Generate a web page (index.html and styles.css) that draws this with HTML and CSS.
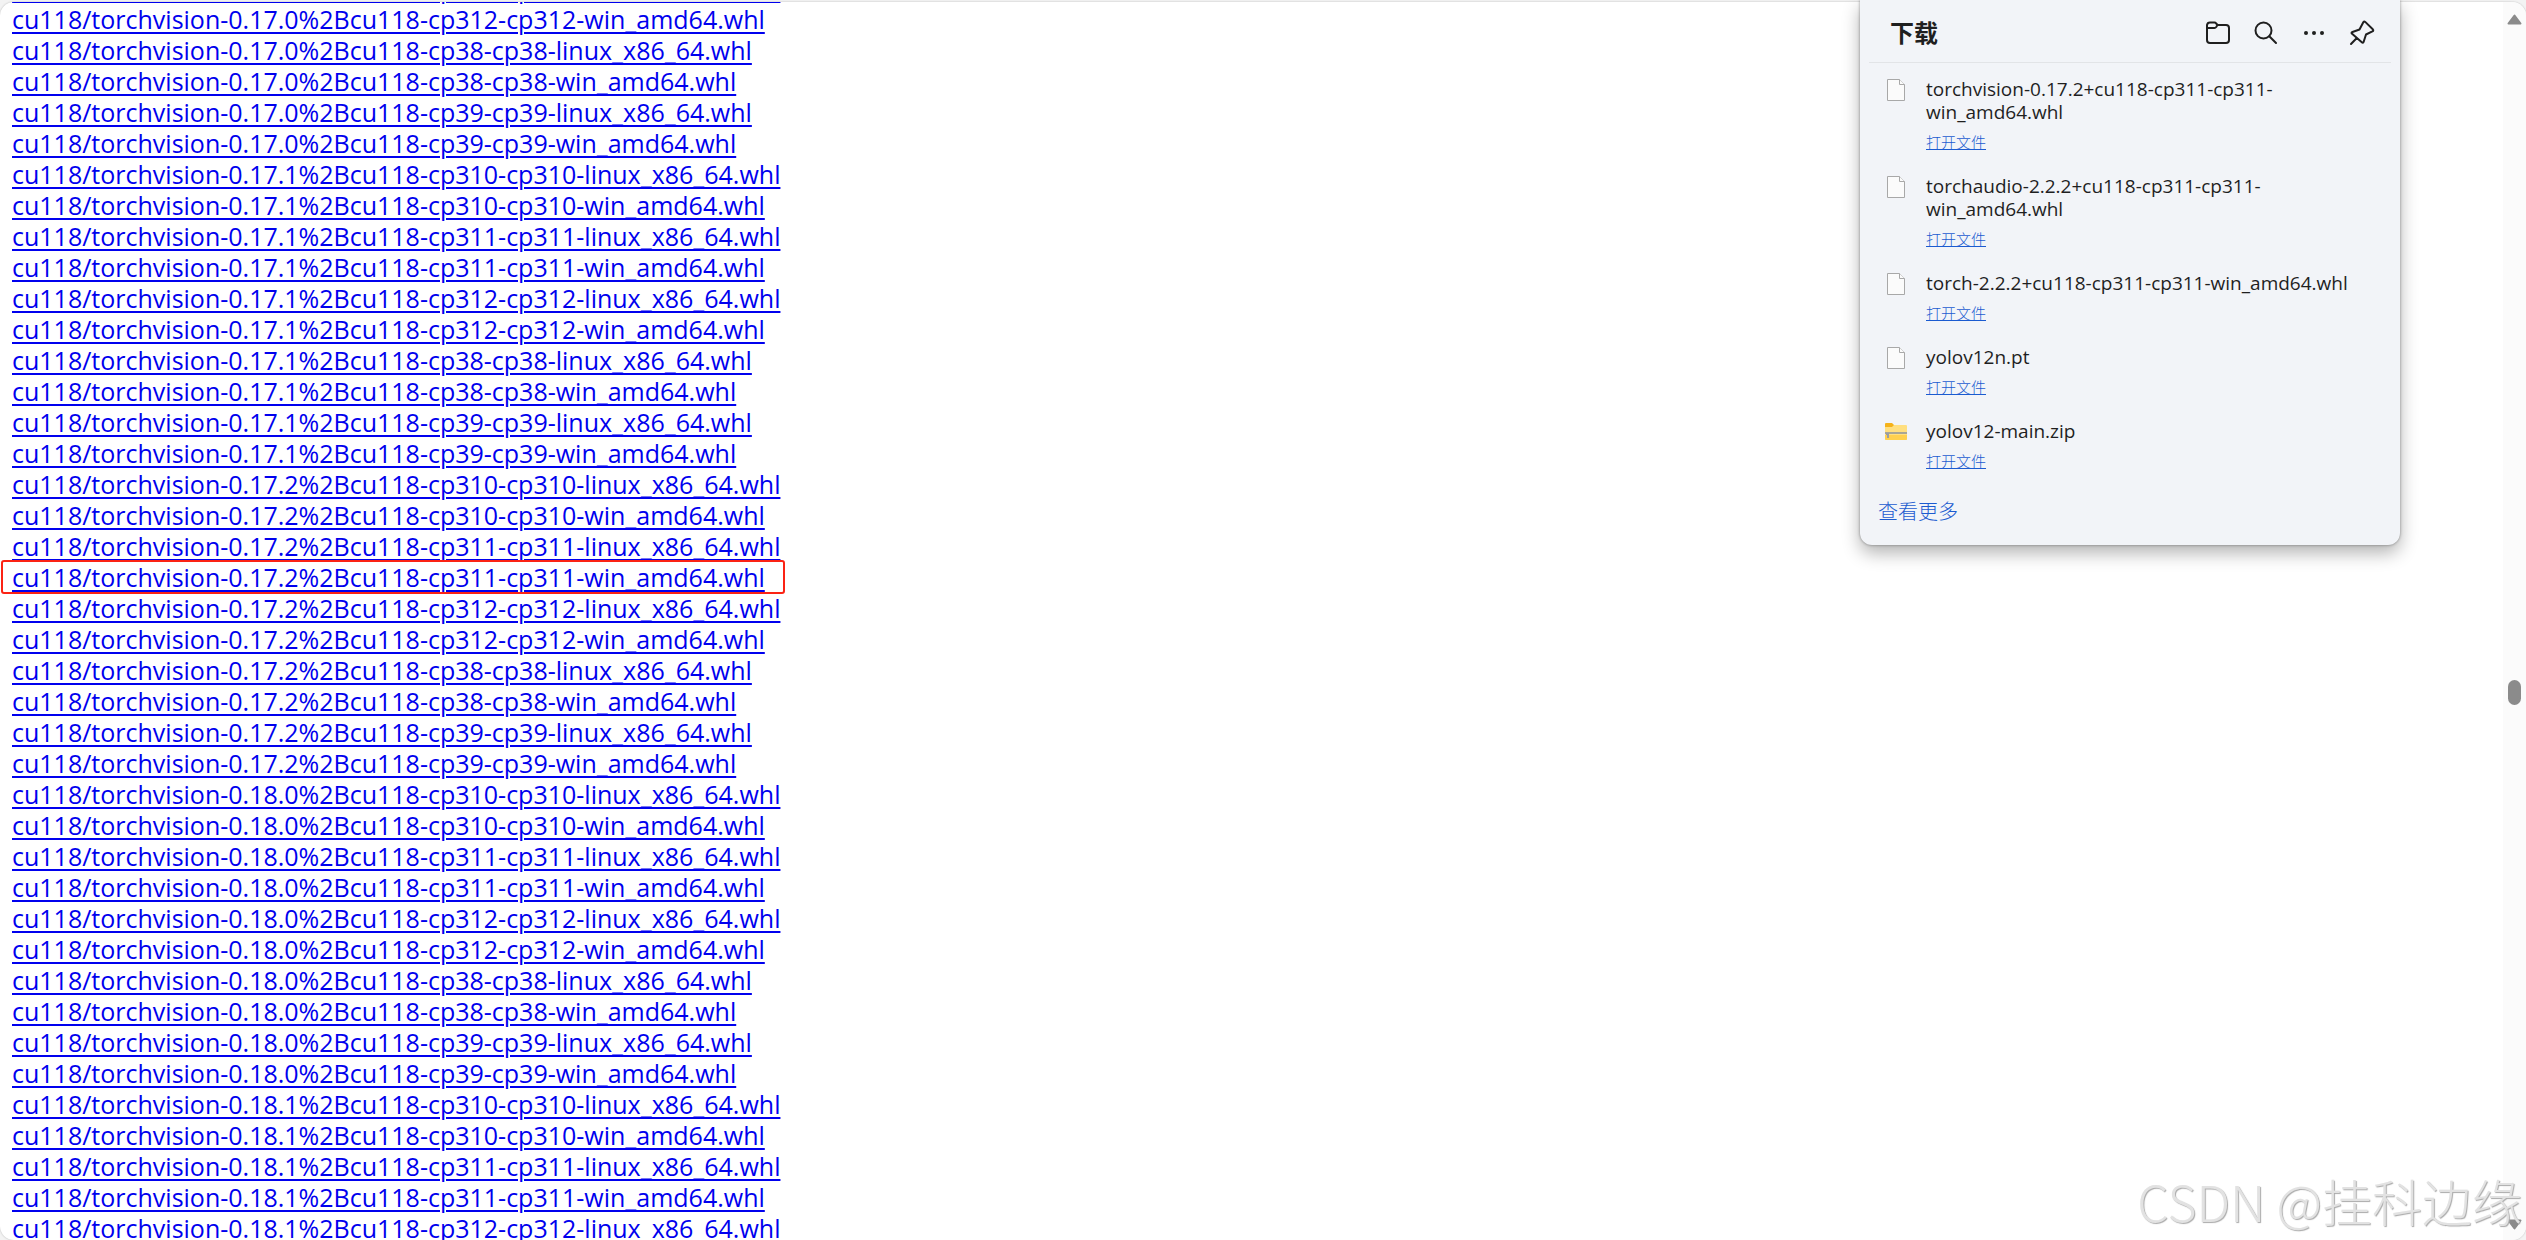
FILE: index.html
```
<!DOCTYPE html>
<html lang="zh-CN">
<head>
  <meta charset="utf-8">
  <title>torch_stable</title>
  <link rel="stylesheet" href="styles.css">
</head>
<body>
  <div class="page">
    <main class="content">
      <ul class="links">
        <li><a href="#">cu118/torchvision-0.17.0%2Bcu118-cp312-cp312-linux_x86_64.whl</a></li>
        <li><a href="#">cu118/torchvision-0.17.0%2Bcu118-cp312-cp312-win_amd64.whl</a></li>
        <li><a href="#">cu118/torchvision-0.17.0%2Bcu118-cp38-cp38-linux_x86_64.whl</a></li>
        <li><a href="#">cu118/torchvision-0.17.0%2Bcu118-cp38-cp38-win_amd64.whl</a></li>
        <li><a href="#">cu118/torchvision-0.17.0%2Bcu118-cp39-cp39-linux_x86_64.whl</a></li>
        <li><a href="#">cu118/torchvision-0.17.0%2Bcu118-cp39-cp39-win_amd64.whl</a></li>
        <li><a href="#">cu118/torchvision-0.17.1%2Bcu118-cp310-cp310-linux_x86_64.whl</a></li>
        <li><a href="#">cu118/torchvision-0.17.1%2Bcu118-cp310-cp310-win_amd64.whl</a></li>
        <li><a href="#">cu118/torchvision-0.17.1%2Bcu118-cp311-cp311-linux_x86_64.whl</a></li>
        <li><a href="#">cu118/torchvision-0.17.1%2Bcu118-cp311-cp311-win_amd64.whl</a></li>
        <li><a href="#">cu118/torchvision-0.17.1%2Bcu118-cp312-cp312-linux_x86_64.whl</a></li>
        <li><a href="#">cu118/torchvision-0.17.1%2Bcu118-cp312-cp312-win_amd64.whl</a></li>
        <li><a href="#">cu118/torchvision-0.17.1%2Bcu118-cp38-cp38-linux_x86_64.whl</a></li>
        <li><a href="#">cu118/torchvision-0.17.1%2Bcu118-cp38-cp38-win_amd64.whl</a></li>
        <li><a href="#">cu118/torchvision-0.17.1%2Bcu118-cp39-cp39-linux_x86_64.whl</a></li>
        <li><a href="#">cu118/torchvision-0.17.1%2Bcu118-cp39-cp39-win_amd64.whl</a></li>
        <li><a href="#">cu118/torchvision-0.17.2%2Bcu118-cp310-cp310-linux_x86_64.whl</a></li>
        <li><a href="#">cu118/torchvision-0.17.2%2Bcu118-cp310-cp310-win_amd64.whl</a></li>
        <li><a href="#">cu118/torchvision-0.17.2%2Bcu118-cp311-cp311-linux_x86_64.whl</a></li>
        <li class="marked"><a href="#">cu118/torchvision-0.17.2%2Bcu118-cp311-cp311-win_amd64.whl</a></li>
        <li><a href="#">cu118/torchvision-0.17.2%2Bcu118-cp312-cp312-linux_x86_64.whl</a></li>
        <li><a href="#">cu118/torchvision-0.17.2%2Bcu118-cp312-cp312-win_amd64.whl</a></li>
        <li><a href="#">cu118/torchvision-0.17.2%2Bcu118-cp38-cp38-linux_x86_64.whl</a></li>
        <li><a href="#">cu118/torchvision-0.17.2%2Bcu118-cp38-cp38-win_amd64.whl</a></li>
        <li><a href="#">cu118/torchvision-0.17.2%2Bcu118-cp39-cp39-linux_x86_64.whl</a></li>
        <li><a href="#">cu118/torchvision-0.17.2%2Bcu118-cp39-cp39-win_amd64.whl</a></li>
        <li><a href="#">cu118/torchvision-0.18.0%2Bcu118-cp310-cp310-linux_x86_64.whl</a></li>
        <li><a href="#">cu118/torchvision-0.18.0%2Bcu118-cp310-cp310-win_amd64.whl</a></li>
        <li><a href="#">cu118/torchvision-0.18.0%2Bcu118-cp311-cp311-linux_x86_64.whl</a></li>
        <li><a href="#">cu118/torchvision-0.18.0%2Bcu118-cp311-cp311-win_amd64.whl</a></li>
        <li><a href="#">cu118/torchvision-0.18.0%2Bcu118-cp312-cp312-linux_x86_64.whl</a></li>
        <li><a href="#">cu118/torchvision-0.18.0%2Bcu118-cp312-cp312-win_amd64.whl</a></li>
        <li><a href="#">cu118/torchvision-0.18.0%2Bcu118-cp38-cp38-linux_x86_64.whl</a></li>
        <li><a href="#">cu118/torchvision-0.18.0%2Bcu118-cp38-cp38-win_amd64.whl</a></li>
        <li><a href="#">cu118/torchvision-0.18.0%2Bcu118-cp39-cp39-linux_x86_64.whl</a></li>
        <li><a href="#">cu118/torchvision-0.18.0%2Bcu118-cp39-cp39-win_amd64.whl</a></li>
        <li><a href="#">cu118/torchvision-0.18.1%2Bcu118-cp310-cp310-linux_x86_64.whl</a></li>
        <li><a href="#">cu118/torchvision-0.18.1%2Bcu118-cp310-cp310-win_amd64.whl</a></li>
        <li><a href="#">cu118/torchvision-0.18.1%2Bcu118-cp311-cp311-linux_x86_64.whl</a></li>
        <li><a href="#">cu118/torchvision-0.18.1%2Bcu118-cp311-cp311-win_amd64.whl</a></li>
        <li><a href="#">cu118/torchvision-0.18.1%2Bcu118-cp312-cp312-linux_x86_64.whl</a></li>
      </ul>
    </main>

    <div class="scrollbar">
      <svg class="arrow" viewBox="0 0 15 11"><path d="M7.5 1.5 L13.5 9.5 H1.5 Z"/></svg>
      <div class="track"><div class="thumb"></div></div>
      <svg class="arrow" viewBox="0 0 15 11"><path d="M7.5 9.5 L13.5 1.5 H1.5 Z"/></svg>
    </div>
  </div>

  <section class="downloads">
    <header class="downloads-header">
      <h2>下载</h2>
      <button type="button" aria-label="打开下载文件夹">
        <svg viewBox="0 0 24 24"><path d="M1 7V4A3 3 0 0 1 4 1.500H8.500Q9.500 1.500 10.200 2.500L11.500 4H20A3 3 0 0 1 23 7V19A3 3 0 0 1 20 22H4A3 3 0 0 1 1 19V7H8.500Q9.500 7 10.200 6L11.500 4"/></svg>
      </button>
      <button type="button" aria-label="搜索下载">
        <svg viewBox="0 0 24 24"><circle cx="9.500" cy="9.500" r="8"/><path d="M15.300 15.300L22 22"/></svg>
      </button>
      <button type="button" aria-label="更多选项">
        <svg class="dots" viewBox="0 0 24 24"><circle cx="4" cy="12" r="2"/><circle cx="12" cy="12" r="2"/><circle cx="20" cy="12" r="2"/></svg>
      </button>
      <button type="button" aria-label="固定下载">
        <svg viewBox="0 0 24 24"><path d="M13.300 1.200Q14 -.2 15.200 .9L22.800 8.300Q23.900 9.600 22.400 10.400L16 13.500L13.600 21Q13 22.500 11.800 21.300L1.800 12.600Q1 11.500 2.500 11L9.500 8.500ZM6.800 17L1 23"/></svg>
      </button>
    </header>

    <ul class="files">
      <li class="file">
        <svg class="file-icon" viewBox="0 0 22 22"><path class="sheet" d="M2.500 .5H14.500L19.500 5.500V21.500H2.500Z"/><path class="sheet" d="M14.500 .5V5.500H19.500"/></svg>
        <div class="file-info">
          <p>torchvision-0.17.2+cu118-cp311-cp311-win_amd64.whl</p>
          <a href="#">打开文件</a>
        </div>
      </li>
      <li class="file">
        <svg class="file-icon" viewBox="0 0 22 22"><path class="sheet" d="M2.500 .5H14.500L19.500 5.500V21.500H2.500Z"/><path class="sheet" d="M14.500 .5V5.500H19.500"/></svg>
        <div class="file-info">
          <p>torchaudio-2.2.2+cu118-cp311-cp311-win_amd64.whl</p>
          <a href="#">打开文件</a>
        </div>
      </li>
      <li class="file">
        <svg class="file-icon" viewBox="0 0 22 22"><path class="sheet" d="M2.500 .5H14.500L19.500 5.500V21.500H2.500Z"/><path class="sheet" d="M14.500 .5V5.500H19.500"/></svg>
        <div class="file-info">
          <p>torch-2.2.2+cu118-cp311-cp311-win_amd64.whl</p>
          <a href="#">打开文件</a>
        </div>
      </li>
      <li class="file">
        <svg class="file-icon" viewBox="0 0 22 22"><path class="sheet" d="M2.500 .5H14.500L19.500 5.500V21.500H2.500Z"/><path class="sheet" d="M14.500 .5V5.500H19.500"/></svg>
        <div class="file-info">
          <p>yolov12n.pt</p>
          <a href="#">打开文件</a>
        </div>
      </li>
      <li class="file">
        <svg class="file-icon" viewBox="0 0 22 22"><path fill="#f5b21a" d="M0 3Q0 2 1 2H7L9 4V8H0Z"/><path fill="#ffdf80" d="M0 6H7L9 4H21Q22 4 22 5V18Q22 19 21 19H1Q0 19 0 18Z"/><path fill="#ffd04f" d="M0 14H22V18Q22 19 21 19H1Q0 19 0 18Z"/><path fill="#a8a697" d="M0 11H22V13H0Z"/><path fill="#9a9da3" d="M1 12H4V17H2V14H1Z"/></svg>
        <div class="file-info">
          <p>yolov12-main.zip</p>
          <a href="#">打开文件</a>
        </div>
      </li>
    </ul>

    <a class="more" href="#">查看更多</a>
  </section>

  <div class="watermark">CSDN @挂科边缘</div>
</body>
</html>
```
FILE: styles.css
```
* {
  box-sizing: border-box;
}

body {
  margin: 0;
  padding-top: 2px;
  height: 100vh;
  overflow: hidden;
  background-color: #f3f3f3;
  font-family: "Open Sans", "Noto Sans CJK SC", sans-serif;
}

ul {
  margin: 0;
  padding: 0;
  list-style: none;
}

.page {
  display: flex;
  height: 100%;
  overflow: hidden;
  background-color: #fff;
  border-radius: 14px;
  box-shadow: 0 0 2px rgba(0, 0, 0, 0.25);
}

.content {
  flex: 1;
  padding: 0 12px;
}

/* list is scrolled part of a row past the top edge */
.links {
  margin-top: -29px;
}

.links li {
  width: fit-content;
  font-size: 25px;
  line-height: 31px;
  white-space: nowrap;
}

.links a {
  color: #0000ee;
  text-decoration-thickness: 2px;
  text-underline-offset: 3px;
}

.marked {
  position: relative;
}

.marked::after {
  content: "";
  position: absolute;
  top: -2px;
  right: -20px;
  bottom: -1px;
  left: -11px;
  border: 2px solid #fb2314;
  border-radius: 3px;
}

/* scrollbar */
.scrollbar {
  display: flex;
  flex-direction: column;
  align-items: center;
  width: 23px;
  padding: 12px 0 10px;
  background-color: #fbfbfb;
}

.arrow {
  width: 15px;
  height: 11px;
  fill: #8b8b8b;
  stroke: #8b8b8b;
  stroke-width: 2;
  stroke-linejoin: round;
}

.track {
  display: flex;
  flex: 1;
  flex-direction: column;
}

.track::before {
  content: "";
  flex: 56;
}

.track::after {
  content: "";
  flex: 44;
}

.thumb {
  width: 13px;
  height: 25px;
  background-color: #8b8b8b;
  border-radius: 7px;
}

/* downloads popup */
.downloads {
  position: absolute;
  top: 0;
  right: 126px;
  width: 540px;
  padding-bottom: 22px;
  background-color: #f2f4f8;
  border-radius: 0 0 12px 12px;
  box-shadow: 0 0 3px rgba(0, 0, 0, 0.4), 0 8px 18px rgba(0, 0, 0, 0.3);
  color: #1f1f1f;
}

.downloads-header {
  display: flex;
  align-items: center;
  gap: 24px;
  height: 63px;
  margin: 0 9px;
  padding: 3px 17px 0 21px;
  border-bottom: 1px solid #e2e4e7;
}

.downloads-header h2 {
  flex: 1;
  margin: 0;
  font-size: 24px;
  line-height: 32px;
}

.downloads-header button {
  width: 24px;
  height: 24px;
  padding: 0;
  border: none;
  background: none;
  cursor: pointer;
}

.downloads-header svg {
  display: block;
  overflow: visible;
  fill: none;
  stroke: #1f1f1f;
  stroke-width: 2;
  stroke-linecap: round;
  stroke-linejoin: round;
}

.downloads-header .dots {
  fill: #1f1f1f;
  stroke: none;
}

.files {
  display: flex;
  flex-direction: column;
  gap: 22px;
  padding: 15px 45px 0 25px;
}

.file {
  display: flex;
  gap: 19px;
}

.file-icon {
  flex: none;
  width: 22px;
  height: 22px;
  margin-top: 1px;
}

.sheet {
  fill: #fbfbfb;
  stroke: #a8a8a8;
}

.file-info p {
  margin: 0 0 6px;
  font-size: 19px;
  line-height: 23px;
}

.file-info a {
  display: block;
  width: fit-content;
  color: #1b5bd0;
  font-family: "Noto Sans CJK SC", sans-serif;
  font-size: 15px;
  font-weight: 300;
  line-height: 23px;
}

.more {
  display: block;
  width: fit-content;
  margin: 27px 0 0 18px;
  color: #1b5bd0;
  font-family: "Noto Sans CJK SC", sans-serif;
  font-size: 20px;
  font-weight: 300;
  line-height: 24px;
  text-decoration: none;
}

.watermark {
  position: absolute;
  right: 4px;
  bottom: 5px;
  color: #e2e2e2;
  font-family: "Noto Sans CJK SC", sans-serif;
  font-size: 50px;
  font-weight: 300;
  line-height: 70px;
  text-shadow: 1px 1px 1px #aaa;
}
```
